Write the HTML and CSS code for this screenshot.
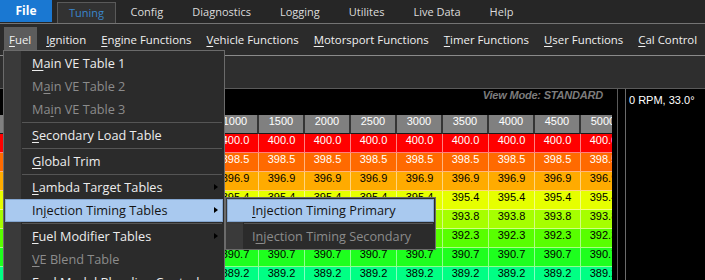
FILE: index.html
```html
<!DOCTYPE html>
<html lang="en">
<head>
    <meta charset="UTF-8">
    <meta name="viewport" content="width=device-width, initial-scale=1.0">
    <title>Tuning - Fuel</title>
    <link rel="stylesheet" href="styles.css">
</head>
<body>

    <div class="menubar">
        <span class="file-btn">File</span>
        <span class="tab active">Tuning</span>
        <span class="tab">Config</span>
        <span class="tab">Diagnostics</span>
        <span class="tab">Logging</span>
        <span class="tab">Utilites</span>
        <span class="tab">Live Data</span>
        <span class="tab">Help</span>
    </div>

    <div class="toolbar">
        <span class="tool open"><u>F</u>uel</span>
        <span class="tool"><u>I</u>gnition</span>
        <span class="tool"><u>E</u>ngine Functions</span>
        <span class="tool"><u>V</u>ehicle Functions</span>
        <span class="tool"><u>M</u>otorsport Functions</span>
        <span class="tool"><u>T</u>imer Functions</span>
        <span class="tool"><u>U</u>ser Functions</span>
        <span class="tool"><u>C</u>al Control</span>
    </div>

    <div class="strip"></div>

    <div class="workspace">
        <div class="table-pane">
            <div class="view-mode">View Mode: STANDARD</div>
            <div class="grid-clip">
                <div id="grid" class="grid"></div>
            </div>
        </div>
        <div class="info-pane">0 RPM, 33.0°</div>
    </div>

    <!-- Fuel dropdown -->
    <div class="dropdown main-menu">
        <div class="item"><u>M</u>ain VE Table 1</div>
        <div class="item disabled">M<u>a</u>in VE Table 2</div>
        <div class="item disabled">Ma<u>i</u>n VE Table 3</div>
        <div class="sep"></div>
        <div class="item"><u>S</u>econdary Load Table</div>
        <div class="sep"></div>
        <div class="item"><u>G</u>lobal Trim</div>
        <div class="sep"></div>
        <div class="item sub"><u>L</u>ambda Target Tables</div>
        <div class="item sub hot">In<u>j</u>ection Timing Tables</div>
        <div class="sep"></div>
        <div class="item sub"><u>F</u>uel Modifier Tables</div>
        <div class="item disabled"><u>V</u>E Blend Table</div>
        <div class="item">Fuel Model Blending Control</div>
    </div>

    <div class="dropdown sub-menu">
        <div class="item hot"><u>I</u>njection Timing Primary</div>
        <div class="sep"></div>
        <div class="item disabled">I<u>n</u>jection Timing Secondary</div>
    </div>

    <script>
        const rpmSites = [0, 500, 1000, 1500, 2000, 2500, 3000, 3500, 4000, 4500, 5000, 5500];
        const fuelRows = [
            ['400.0', 'r1'],
            ['398.5', 'r2'],
            ['396.9', 'r3'],
            ['395.4', 'r4'],
            ['393.8', 'r5'],
            ['392.3', 'r6'],
            ['390.7', 'r7'],
            ['389.2', 'r8']
        ];

        const grid = document.getElementById('grid');

        let html = '<div class="row head"><div class="cell label">kPa</div>';
        rpmSites.forEach(rpm => {
            html += `<div class="cell">${rpm}</div>`;
        });
        html += '</div>';

        fuelRows.forEach((row, i) => {
            html += `<div class="row ${row[1]}"><div class="cell label">${100 - i * 10}</div>`;
            rpmSites.forEach(() => {
                html += `<div class="cell">${row[0]}</div>`;
            });
            html += '</div>';
        });

        grid.innerHTML = html;
    </script>

</body>
</html>
```

FILE: styles.css
```css
* {
    box-sizing: border-box;
}

body {
    margin: 0;
    width: 705px;
    height: 280px;
    overflow: hidden;
    position: relative;
    background: #2d2d2d;
    font-family: "Open Sans", "Noto Sans", sans-serif;
    font-size: 12px;
    color: #e8e8e8;
}

u {
    text-decoration: underline;
    text-underline-offset: 2px;
}

/* top menu bar */
.menubar {
    display: flex;
    height: 23px;
    background: #262626;
    font-size: 11px;
    white-space: nowrap;
}

.file-btn {
    width: 52px;
    height: 22px;
    line-height: 22px;
    margin-right: 5px;
    background: #1a78d2;
    color: #fff;
    font-size: 12px;
    font-weight: bold;
    text-align: center;
}

.tab {
    height: 21px;
    margin-top: 2px;
    padding: 0 14.5px;
    line-height: 20px;
    color: #dcdcdc;
}

.tab.active {
    padding: 0 11px;
    background: #323232;
    border: 1px solid #5a5a5a;
    border-bottom: none;
    color: #3a86cc;
}

/* function toolbar */
.toolbar {
    display: flex;
    gap: 3px;
    height: 33px;
    padding-left: 4px;
    border-top: 1px solid #747474;
    border-bottom: 1px solid #8a8a8a;
    background: #2b2b2b;
    font-size: 11.4px;
    white-space: nowrap;
}

.tool {
    height: 25px;
    margin-top: 3px;
    padding: 0 6px;
    line-height: 25px;
    color: #f0f0f0;
}

.tool.open {
    padding: 0 6px 0 5px;
    background: #5c5c5c;
}

.strip {
    height: 33px;
    background: #2e2e2e;
    border-bottom: 1px solid #5a5a5a;
}

/* table area */
.workspace {
    display: flex;
    height: 191px;
    background: #000;
}

.table-pane {
    width: 618px;
    border-right: 1px solid #5a5a5a;
    background: #000;
}

.view-mode {
    height: 26px;
    line-height: 26px;
    padding-right: 14px;
    text-align: right;
    font: italic bold 11px "Liberation Sans", Arial, sans-serif;
    letter-spacing: -0.2px;
    color: #7c7c7c;
}

.grid-clip {
    width: 612px;
    overflow: hidden;
}

.grid {
    width: max-content;
}

.row {
    display: flex;
    height: 19px;
}

.cell {
    flex: none;
    width: 46px;
    height: 19px;
    line-height: 18px;
    text-align: center;
    font: 11px "Liberation Sans", Arial, sans-serif;
    border-right: 1px solid rgba(255, 255, 255, 0.5);
    border-bottom: 1px solid rgba(255, 255, 255, 0.5);
    color: #000;
}

.cell.label {
    width: 121px;
    background: #808080;
    color: #fff;
}

.head .cell {
    background: #808080;
    color: #fff;
    border-right: 2px solid #353535;
    border-bottom: 1px solid #1a1a1a;
}

.r1 .cell { background: #ff0000; color: #fff; }
.r2 .cell { background: #ff6a00; color: #fff; }
.r3 .cell { background: #ffab00; }
.r4 .cell { background: #e6ff00; }
.r5 .cell { background: #a6ff00; }
.r6 .cell { background: #58ff00; }
.r7 .cell { background: #1eff1e; }
.r8 .cell { background: #00ff84; }

.info-pane {
    flex: 1;
    margin-left: 7px;
    padding: 5px 3px;
    border-left: 1px solid #6a6a6a;
    font: 11px "Liberation Sans", Arial, sans-serif;
    color: #fff;
}

/* dropdown menus */
.dropdown {
    position: absolute;
    padding: 1px 0;
    border: 1px solid #6b6b6b;
    background: linear-gradient(to right, #3a3a3a 0 17px, #2b2b2b 17px);
    font-size: 12.7px;
}

.main-menu {
    left: 3px;
    top: 50px;
    width: 222px;
    height: 240px;
    overflow: hidden;
}

.sub-menu {
    left: 225px;
    top: 197px;
    width: 211px;
}

.item {
    position: relative;
    height: 23px;
    margin: 0 1px;
    padding-left: 27px;
    line-height: 23px;
    color: #ededed;
    white-space: nowrap;
}

.item.disabled {
    color: #8c8c8c;
}

.item.hot {
    padding-left: 26px;
    line-height: 21px;
    background: #a9c9ef;
    border: 1px solid #84a6d0;
    color: #141414;
}

.sub-menu .item {
    padding-left: 25px;
}

.sub-menu .item.hot {
    padding-left: 24px;
}

.item.sub::after {
    content: "";
    position: absolute;
    right: 5px;
    top: 8px;
    border-top: 3.5px solid transparent;
    border-bottom: 3.5px solid transparent;
    border-left: 4px solid #000;
}

.item.sub.hot::after {
    top: 7px;
    right: 4px;
}

.sep {
    height: 3px;
    padding-top: 1px;
    margin: 0 2px 0 18px;
}

.sep::before {
    content: "";
    display: block;
    height: 1px;
    background: #555;
}
```
